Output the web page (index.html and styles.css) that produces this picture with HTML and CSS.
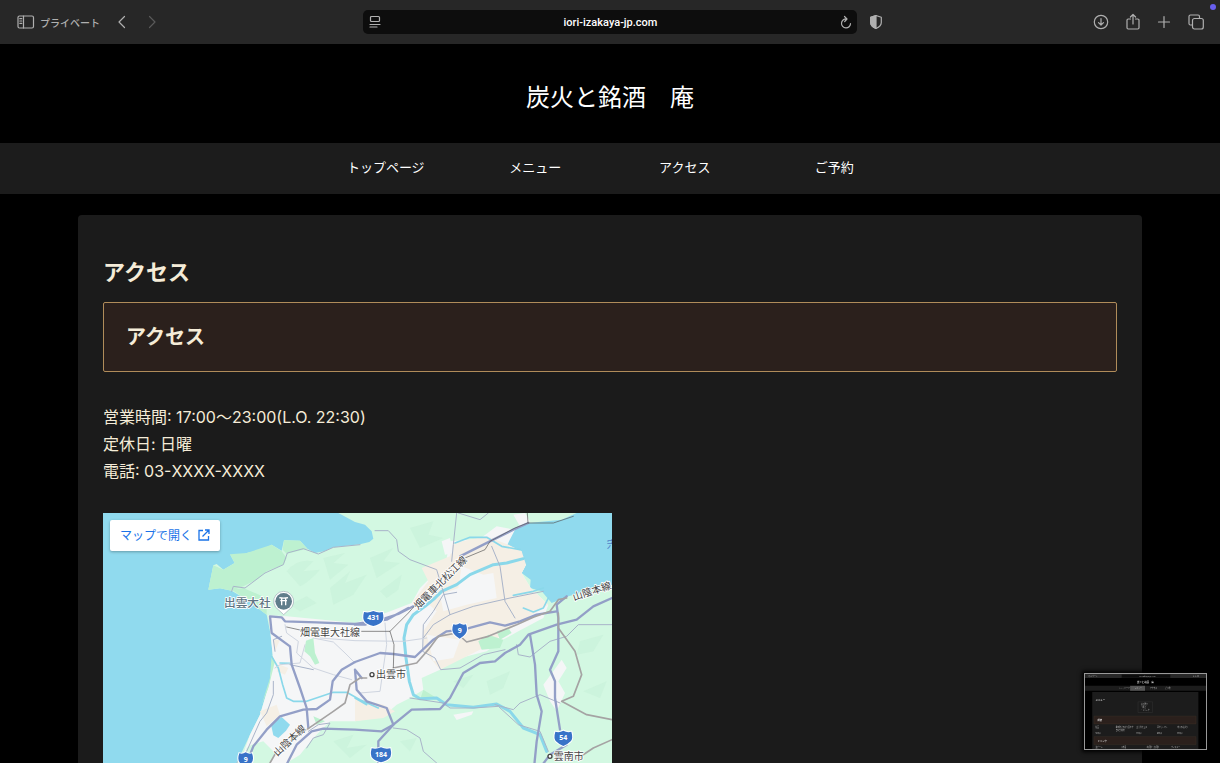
FILE: index.html
```html
<!DOCTYPE html>
<html lang="ja">
<head>
<meta charset="utf-8">
<meta name="viewport" content="width=device-width, initial-scale=1">
<title>アクセス | 炭火と銘酒 庵</title>
<link rel="stylesheet" href="styles.css">
</head>
<body>
<div class="toolbar">
  <div class="tools tools-left">
    <button class="tool private" type="button">
      <svg width="18" height="14" viewBox="0 0 18 14"><rect x="1" y="1" width="15.500" height="12" rx="1.500"/><path d="M6.500 1v12M2.800 3.700h2M2.800 6h2M2.800 8.300h2"/></svg>
      <span>プライベート</span>
    </button>
    <button class="tool" type="button" aria-label="戻る"><svg width="10" height="14" viewBox="0 0 10 14"><path d="M7.500 1.500 2 7l5.500 5.500"/></svg></button>
    <button class="tool faded" type="button" aria-label="進む" disabled><svg width="10" height="14" viewBox="0 0 10 14"><path d="M2.500 1.500 8 7l-5.500 5.500"/></svg></button>
  </div>
  <div class="address">
    <button class="tool" type="button" aria-label="ページメニュー"><svg width="12" height="14" viewBox="0 0 12 14"><rect x="1.500" y="1.500" width="9" height="5" rx="1"/><path d="M1 9.500h10M1 12h7"/></svg></button>
    <input class="url" type="text" value="iori-izakaya-jp.com" aria-label="アドレス">
    <button class="tool" type="button" aria-label="再読み込み"><svg width="12" height="14" viewBox="0 0 12 14"><path d="M6.500 4A4.500 4.500 0 1 0 10.500 8.500M4.500 1.500 7 4 4.700 6.500"/></svg></button>
  </div>
  <div class="tools tools-right">
    <button class="tool" type="button" aria-label="プライバシー"><svg width="14" height="16" viewBox="0 0 14 16"><path d="M7 1.500 12.300 3.300v5.200c0 3-2.500 4.800-5.300 6-2.800-1.200-5.300-3-5.300-6V3.300Z"/><path class="solid" d="M7 1.500v13c-2.800-1.200-5.300-3-5.300-6V3.300Z"/></svg></button>
    <div class="actions">
      <button class="tool" type="button" aria-label="ダウンロード"><svg width="16" height="16" viewBox="0 0 16 16"><circle cx="8" cy="8" r="6.700"/><path d="M8 4.500v6.500M5.500 8.600 8 11l2.500-2.400"/></svg></button>
      <button class="tool" type="button" aria-label="共有"><svg width="14" height="18" viewBox="0 0 14 18"><path d="M4.500 6H2.200Q1 6 1 7.200v7.600Q1 16 2.200 16h9.600q1.200 0 1.200-1.200V7.200Q13 6 11.800 6H9.500M7 11V1.500M4.400 4 7 1.500 9.600 4"/></svg></button>
      <button class="tool" type="button" aria-label="新規タブ"><svg width="14" height="14" viewBox="0 0 14 14"><path d="M7 1.500v11M1.500 7h11"/></svg></button>
      <button class="tool" type="button" aria-label="タブ一覧"><svg width="16" height="16" viewBox="0 0 16 16"><rect x="4.500" y="4.500" width="10.800" height="10.500" rx="2"/><path d="M4 11H2.500Q1 11 1 9.500v-7Q1 1 2.500 1h7.500Q11.500 1 11.500 2.500V4"/></svg></button>
    </div>
  </div>
  <i class="notice"></i>
</div>

<div class="page">
  <header class="site-header"><h1>炭火と銘酒　庵</h1></header>
  <nav class="site-nav">
    <ul>
      <li><a href="#top">トップページ</a></li>
      <li><a href="#menu">メニュー</a></li>
      <li><a href="#access">アクセス</a></li>
      <li><a href="#reserve">ご予約</a></li>
    </ul>
  </nav>
  <main class="panel" id="access">
    <h2>アクセス</h2>
    <h3>アクセス</h3>
    <p class="info">営業時間: 17:00〜23:00(L.O. 22:30)<br>定休日: 日曜<br>電話: 03-XXXX-XXXX</p>
    <div class="map">
      <svg class="map-art" viewBox="9 15 1527 1143" role="img" aria-label="出雲市周辺の地図">
        <rect class="sea" x="0" y="0" width="1560" height="1180"/>
        <path class="green" d="M715 15 765 42 795 50 815 70 820 92 808 102 780 109 700 118 672 130 645 135 622 122 600 98 552 97 545 128 515 110 485 125 440 135 410 152 390 139 404 165 370 185 350 168 340 172 325 245 360 241 395 248 440 275 500 320 512 380 518 440 510 520 480 620 450 680 410 765 330 960 290 1180H1560V225L1405 265 1355 285 1325 250 1290 240 1292 215 1265 195 1278 170 1260 150 1265 130 1222 110 1225 85 1245 65 1285 45 1385 35 1430 15Z"/>
        <path class="wood" d="M325 245 340 172 370 185 404 165 390 139 440 135 515 110 545 130 560 150 550 170 500 190 470 215 430 235 395 248 360 241ZM552 97 600 98 622 122 560 137 548 125ZM395 245 430 240 500 270 500 320 440 275Z"/>
        <path class="relief" d="M560 190 Q590 150 640 160L610 190 660 185Q630 220 600 235ZM670 150 735 135 700 165 745 170 690 215ZM690 240 750 190 735 225 800 200 760 260 700 290ZM810 150 880 120 850 160 900 165 830 210ZM840 250 905 200 895 245 860 270ZM570 290 620 265 650 285 600 310ZM930 60 1000 40 985 80 1030 90 960 120Z"/>
        <path class="plain" d="M505 322 560 325 700 338 765 345 865 312 935 285 960 240 990 210 1040 150 1050 100 1140 92 1190 55 1245 65 1222 110 1260 150 1278 170 1265 195 1292 240 1345 290 1330 330 1255 370 1200 400 1160 430 1060 455 1020 485 965 510 970 545 930 570 890 590 850 625 765 640 690 640 640 690 600 740 560 765 505 810 420 765 450 680 480 620 510 520 518 440 512 380Z"/>
        <path class="beige" d="M965 180 1050 145 1060 105 1160 85 1225 110 1265 130 1278 170 1265 195 1292 240 1345 290 1255 345 1150 420 1020 485 970 425 970 370 1010 310 965 270 935 285 985 220ZM540 470 565 480 555 500 530 490ZM480 610 530 590 540 620 500 655ZM765 570 850 590 885 610 850 630 765 640ZM520 395 540 395 525 430Z"/>
        <path class="plain" d="M1085 175 1150 200 1180 195 1190 270 1100 290 1030 310 1020 260 1075 240ZM980 380 1080 395 1060 450 1000 460ZM1330 530 1385 455 1400 480 1375 520 1395 555 1370 610 1350 580ZM1060 620 1120 610 1115 620 1070 636ZM1240 20 1275 15 1290 40 1260 55ZM1025 100 1050 90 1060 135 1035 140Z"/>
        <path class="wood" d="M618 398 640 390 645 435 658 465 645 470 630 445 613 430ZM515 440 525 460 505 540 485 590 510 510ZM1135 400 1165 380 1210 395 1200 420 1145 425ZM1190 370 1225 360 1235 375 1200 395ZM640 625 675 640 650 650ZM970 545 1010 570 960 575Z"/>
        <path class="green" d="M455 710 490 700 525 735 510 765 430 765 440 720Z"/>
        <path class="relief" d="M700 700 760 680 740 720 800 710 750 750ZM900 700 950 690 930 730ZM1060 520 1120 500 1090 540ZM1160 520 1230 490 1210 540 1170 560ZM1440 400 1510 380 1480 430 1430 440ZM1450 550 1520 520 1500 570Z"/>
        <path class="sea" d="M513 650 530 637 545 627 570 650 558 668 535 690 520 682Z"/>

        <g class="river">
          <path class="wide" d="M1270 152 1220 165 1180 170 1110 200 1070 230 1025 250 1005 270 975 295 940 320 920 350 912 390 918 450 928 520 940 560 960 572 1010 570 1040 590 1120 598 1190 588 1230 610 1270 660 1320 680 1340 730"/>
          <path d="M515 445 535 480 548 530 560 570 580 580 620 580 700 553 740 553 780 575 835 600M1065 105 1110 88 1160 88 1205 115 1260 125M1240 262 1300 250 1330 240M1270 300 1300 312 1330 300 1345 270M765 570 800 590M540 465 570 466"/>
        </g>
        <g class="lane">
          <path d="M395 250 400 235 435 240 495 195 550 170 562 135 610 122 655 138 700 118 780 110"/>
          <path d="M825 68 865 68 890 95 895 130 930 155 1010 185 1025 235 1050 320M1070 15 1060 110 1055 160M1075 15 1140 35 1165 15"/>
          <path d="M1175 115 1200 175 1215 280 1245 330M1330 250 1230 270 1120 295 1050 320 1000 350 970 390M1070 253 1030 260 1000 310 970 350 968 430 1005 450 1022 485 1080 480 1150 440 1215 425M1250 410 1255 440 1290 447 1350 400 1400 385 1435 350 1536 350"/>
          <path class="faint" d="M555 350 560 375 595 400 590 435 640 480 700 500 755 515M525 480 540 470 600 465 615 410M640 390 700 402 735 435 765 465M660 390 765 398 910 400 980 390M855 345 860 410 840 550 780 555"/>
          <path d="M520 520 520 560 500 615 480 640 440 730 410 765M545 385 520 395 525 430M570 470 640 485M625 670 655 650 690 645 670 680 640 690 620 720M1185 590 1240 605 1260 585 1320 560 1380 585M930 570 1030 585 1050 600 1120 600 1195 595 1255 650 1320 670 1345 730M880 660 920 665 960 690 970 730 1010 765"/>
        </g>
        <g class="road">
          <path d="M440 765 460 715 500 665 540 625 610 605 650 603 690 575 698 520 725 485 765 462 840 435 880 438 945 447 1000 395 1040 370 1090 365 1170 343 1215 353 1260 340 1310 320 1370 310"/>
          <path d="M562 765 590 710 635 670 670 662 765 665 845 670 880 650 935 605 1020 603 1050 570 1090 495 1140 465 1185 460 1215 435 1260 410 1285 380 1370 350 1430 335 1480 295 1536 270"/>
          <path d="M510 325 545 328 555 340 650 343 765 348 860 335 925 300M510 325 515 375 570 415 575 470 600 540 620 600 625 660M765 350 795 350 895 318 940 295M1080 145 1180 95 1240 65 1285 45"/>
          <path d="M1375 330 1370 290 1400 265M1375 330 1375 430 1350 485 1365 520 1365 570 1380 665M1290 380 1305 470 1310 560 1325 610 1310 700 1300 800M765 485 770 545 800 580 860 600 880 650 835 700 835 765M765 485 785 510M1320 780 1350 740 1400 710 1395 680"/>
        </g>
        <g class="rail">
          <path d="M510 765 530 730 620 665 700 610 735 585 750 530 780 510 800 510M880 480 950 465 985 425 1015 385 1070 375 1100 402 1165 385 1250 350 1300 328 1350 310 1375 275 1400 270M1375 315 1375 360 1425 430 1445 500 1420 565 1385 580 1460 620 1536 635M1435 750 1480 720 1536 695"/>
          <path class="thin" d="M560 357 600 366M785 370 870 370 925 315 960 275M870 370 882 410 880 480M1095 150 1155 125 1170 100 1245 60 1283 45 1360 45 1420 25M1282 15 1284 45"/>
        </g>
        <g class="shields">
          <path d="M792 312q14 4 28-3 14 7 28 3 6 22-3 30-7 8-25 12-18-4-25-12-9-8-3-30Z"/>
          <path d="M1060 349q10 4 19-3 10 7 19 3 7 19-2 29-5 7-17 14-12-7-17-14-9-10-2-29Z"/>
          <path d="M418 736q10 4 19-3 10 7 19 3 7 19-2 29-5 7-17 14-12-7-17-14-9-10-2-29Z"/>
          <path d="M815 721q14 4 28-3 14 7 28 3 6 22-3 30-7 8-25 12-18-4-25-12-9-8-3-30Z"/>
          <path d="M1366 671q12 4 24-3 12 7 24 3 6 20-2 29-6 7-22 14-16-7-22-14-8-9-2-29Z"/>
          <text x="820" y="337">431</text><text x="1079" y="376">9</text><text x="437" y="762">9</text><text x="843" y="747">184</text><text x="1390" y="696">54</text>
        </g>
        <path class="pin" d="M551 320 536 306A30 30 0 1 1 566 306Z"/>
        <circle class="pin-disc" cx="551" cy="280" r="25"/>
        <path class="torii" d="M538 269Q551 272 564 269M541 278H561M545 271V292M557 271V292"/>
        <g class="labels">
          <text class="place" x="372" y="297">出雲大社</text>
          <text x="600" y="385">畑電車大社線</text>
          <text transform="translate(954 306) rotate(-45)">畑電車北松江線</text>
          <text transform="translate(1422 278) rotate(-18)">山陰本線</text>
          <text transform="translate(532 746) rotate(-43)">山陰本線</text>
          <text x="828" y="511">出雲市</text>
          <text x="1361" y="756">雲南市</text>
          <text class="water" x="1520" y="121">宍</text>
          <circle cx="816" cy="500" r="6"/><circle cx="1350" cy="745" r="6"/>
        </g>
      </svg>
      <a class="open-map" href="#map">マップで開く
        <svg width="12" height="12" viewBox="0 0 12 12"><path d="M5 1.500H1V11h9.500V7M7 1h4v4M11 1 4.500 7.500"/></svg>
      </a>
    </div>
  </main>
</div>

<svg class="preview" viewBox="0 0 1220 760" role="img" aria-label="メニューページのプレビュー">
  <rect width="1220" height="760"/>
  <path fill="#282828" d="M0 0H1220V40H0Z"/><path fill="#0d0d0d" d="M370 5H860V38H370Z"/>
  <path fill="#1c1c1c" d="M0 119H1220V169H0ZM73 182H1143V760H73Z"/><path fill="#555" d="M455 119H605V169H455Z"/>
  <path fill="#2b201c" stroke="#4b3a2b" stroke-width="3" d="M90 425H1120V503H90ZM90 632H1120V712H90Z"/>
  <path fill="none" stroke="#444" stroke-width="3" d="M535 280H680V388H535Z"/>
  <g class="preview-text">
    <text x="20" y="30">プライベート</text><text x="545" y="30">iori-izakaya-jp.com</text><text x="1090" y="30">↓ ＋ □</text>
    <text class="big" x="525" y="86">炭火と銘酒　庵</text>
    <text x="345" y="151">トップページ</text><text x="502" y="151">メニュー</text><text x="656" y="151">アクセス</text><text x="810" y="151">ご予約</text>
    <text class="big" x="106" y="273">メニュー</text>
    <text x="562" y="315">お品書き</text><text x="562" y="345">・前菜</text><text x="562" y="375">・ドリンク</text>
    <text class="big" x="126" y="474">前菜</text><text class="big" x="126" y="681">ドリンク</text>
    <text x="106" y="548">枝豆</text><text x="310" y="548">季節野菜の盛り合わせ</text><text x="518" y="548">出汁巻き玉子</text><text x="725" y="548">冷やしトマト</text><text x="930" y="548">本日のお造り</text>
    <text x="310" y="574">自家製味噌</text>
    <text x="106" y="604">500円</text><text x="518" y="604">700円</text><text x="725" y="604">600円</text><text x="930" y="604">900円</text>
    <text x="106" y="750">生ビール</text><text x="360" y="750">日本酒</text><text x="620" y="750">芋焼酎・麦焼酎</text><text x="870" y="750">ウイスキー</text>
  </g>
</svg>
</body>
</html>
```
FILE: styles.css
```css
* { box-sizing: border-box; }

body {
  margin: 0;
  height: 100vh;
  overflow: hidden;
  display: flex;
  flex-direction: column;
  background: #000;
  color: #f5ecd8;
  font-family: Inter, "Noto Sans CJK JP", sans-serif;
}

/* Browser toolbar */
.toolbar {
  position: relative;
  flex: none;
  height: 44px;
  display: grid;
  grid-template-columns: 1fr minmax(200px, 494px) 1fr;
  align-items: center;
  background: #272727;
}
.tools { display: flex; align-items: center; }
.tools-left { padding-left: 17px; gap: 20px; }
.tools-right { padding: 0 16px 0 12px; justify-content: space-between; }
.actions { display: flex; align-items: center; gap: 17px; }
.tool {
  display: flex;
  align-items: center;
  padding: 0;
  border: 0;
  background: none;
  color: #b0b0b0;
  font: 500 10px "Noto Sans CJK JP", sans-serif;
}
.private { gap: 5px; margin-right: -3px; }
.faded { color: #5a5a5a; }
.tool svg { fill: none; stroke: currentColor; stroke-width: 1.2; stroke-linecap: round; stroke-linejoin: round; }
.tool .solid { fill: currentColor; }
.address {
  display: flex;
  align-items: center;
  height: 24px;
  padding: 0 5px 0 6px;
  border-radius: 5px;
  background: #0d0d0d;
}
.url {
  flex: 1;
  min-width: 0;
  padding: 0;
  border: 0;
  background: none;
  color: #fff;
  text-align: center;
  font: 500 11px Roboto, sans-serif;
}
.notice {
  position: absolute;
  top: 4px;
  right: 4px;
  width: 6px;
  height: 6px;
  border-radius: 50%;
  background: #685ff0;
}

/* Site */
.page { flex: 1; min-height: 0; overflow: auto; scrollbar-width: none; }
.site-header { padding: 36px 16px 27px; text-align: center; color: #fff; }
.site-header h1 { margin: 0; font-size: 24px; line-height: 36px; font-weight: 400; }
.site-nav { background: #1c1c1c; }
.site-nav ul {
  max-width: 598px;
  margin: 0 auto;
  padding: 0;
  display: grid;
  grid-template-columns: repeat(4, 1fr);
  list-style: none;
}
.site-nav a {
  display: block;
  padding: 13px 0 16px;
  color: #fff;
  font-size: 13px;
  line-height: 22px;
  text-align: center;
  text-decoration: none;
}
.panel {
  width: calc(100% - 156px);
  max-width: 1064px;
  margin: 21px auto;
  padding: 41px 25px;
  border-radius: 4px;
  background: #1b1b1b;
}
.panel h2 { margin: 0 0 14px; font-size: 22px; line-height: 32px; }
.panel h3 {
  margin: 0 0 32px;
  padding: 19px 22px;
  border: 1px solid #b08c5a;
  border-radius: 2px;
  background: #2b201c;
  font-size: 20px;
  line-height: 30px;
}
.info { margin: 0 0 28px; font-size: 16px; line-height: 27px; }

/* Map */
.map { position: relative; max-width: 509px; overflow: hidden; }
.map-art { display: block; width: 100%; }
.sea { fill: #90daee; }
.green { fill: #d3f8e2; }
.wood { fill: #bdf1d0; }
.plain { fill: #f5f6f7; }
.beige { fill: #f5efe5; }
.relief { fill: #c5f0d7; opacity: .5; }
.river, .lane, .road, .rail { fill: none; stroke-linejoin: round; stroke-linecap: round; }
.river { stroke: #8ad8ea; stroke-width: 5; }
.river .wide { stroke-width: 9; }
.lane { stroke: #a9b4c9; stroke-width: 3; }
.lane .faint { stroke: #cfd5e0; }
.road { stroke: #939fc7; stroke-width: 7; }
.rail { stroke: #a5a3a3; stroke-width: 5; }
.rail .thin { stroke: #555; stroke-width: 2; }
.shields path { fill: #3873c8; stroke: #fff; stroke-width: 6; paint-order: stroke; }
.shields text { fill: #fff; font: 700 21px "Noto Sans", sans-serif; text-anchor: middle; }
.pin { fill: #fff; stroke: #9babb4; stroke-width: 2; }
.pin-disc { fill: #607d8b; }
.torii { fill: none; stroke: #fff; stroke-width: 4; }
.labels text {
  fill: #444;
  stroke: #fff;
  stroke-width: 5;
  stroke-linejoin: round;
  paint-order: stroke;
  font: 400 30px "Noto Sans CJK JP", sans-serif;
}
.labels .place { fill: #607482; font-size: 35px; font-weight: 500; }
.labels .water { fill: #5381c8; stroke: none; }
.labels circle { fill: #fff; stroke: #444; stroke-width: 4; }
.open-map {
  position: absolute;
  top: 7px;
  left: 7px;
  display: flex;
  align-items: center;
  gap: 6px;
  height: 31px;
  padding: 0 10px 2px;
  border-radius: 2px;
  background: #fff;
  box-shadow: 0 1px 3px rgba(0, 0, 0, .3);
  color: #1a73e8;
  font-size: 12px;
  text-decoration: none;
}
.open-map svg { fill: none; stroke: currentColor; stroke-width: 1.3; }

/* Floating page preview */
.preview {
  position: fixed;
  right: 13px;
  bottom: 13px;
  width: 123px;
  border: 1px solid #999;
  box-shadow: 0 0 4px 2px #000;
}
.preview-text text { fill: #bbb; font-size: 18px; }
.preview-text .big { fill: #fff; font-size: 24px; }
```
